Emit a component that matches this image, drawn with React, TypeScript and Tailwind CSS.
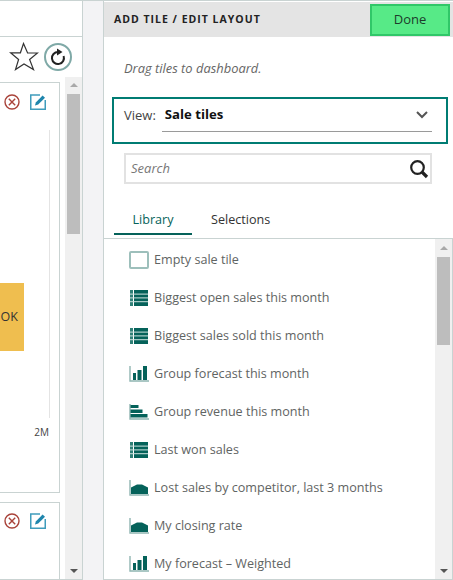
import React from "react";

const teal = "#05625a";

function TableIcon() {
  return (
    <svg width="20" height="16" viewBox="0 0 20 16" className="shrink-0 -mt-[1px]">
      <rect x="1" y="0" width="18" height="16" fill={teal} />
      <rect x="4" y="0" width="1" height="16" fill="#ffffff" />
      <rect x="1" y="0" width="3" height="16" fill="#2f8077" />
      <rect x="1" y="3.6" width="18" height="1" fill="#cfe3e0" />
      <rect x="1" y="7.4" width="18" height="1" fill="#cfe3e0" />
      <rect x="1" y="11.2" width="18" height="1" fill="#cfe3e0" />
    </svg>
  );
}
function EmptyIcon() {
  return <div className="w-[20px] h-[18px] shrink-0 border-2 border-[#9dbfbb] rounded-[2px] bg-white" />;
}
function ColumnsIcon() {
  return (
    <svg width="20" height="16" viewBox="0 0 20 16" className="shrink-0">
      <path d="M1 0V15H20" fill="none" stroke="#8fb5b1" strokeWidth="1.4" />
      <rect x="4" y="7" width="3" height="7" fill={teal} />
      <rect x="8.5" y="4" width="4" height="10" fill={teal} />
      <rect x="14" y="0" width="4" height="14" fill={teal} />
    </svg>
  );
}
function BarsIcon() {
  return (
    <svg width="20" height="16" viewBox="0 0 20 16" className="shrink-0">
      <path d="M1 0V15H20" fill="none" stroke="#8fb5b1" strokeWidth="1.4" />
      <rect x="1.5" y="1" width="8" height="3" fill={teal} />
      <rect x="1.5" y="5.5" width="12" height="3.5" fill={teal} />
      <rect x="1.5" y="10" width="17" height="3.5" fill={teal} />
    </svg>
  );
}
function AreaIcon() {
  return (
    <svg width="20" height="16" viewBox="0 0 20 16" className="shrink-0">
      <path d="M1 0V15H20" fill="none" stroke="#8fb5b1" strokeWidth="1.4" />
      <path d="M2 7.5L8 4.5H13L19 7.5V14H2Z" fill={teal} />
    </svg>
  );
}

function CloseCircle() {
  return (
    <svg width="16" height="16" viewBox="0 0 16 16" className="shrink-0">
      <circle cx="8" cy="8" r="7" fill="none" stroke="#a9433a" strokeWidth="1.4" />
      <path d="M4.8 4.8L11.2 11.2M11.2 4.8L4.8 11.2" stroke="#a9433a" strokeWidth="1.4" />
    </svg>
  );
}
function EditIcon() {
  return (
    <svg width="16" height="16" viewBox="0 0 16 16" className="shrink-0">
      <path d="M10 1H0.75V15.25H15.25V6" fill="none" stroke="#3f9cbc" strokeWidth="1.5" />
      <path d="M5 11.5L5.8 8.4L12.6 1.4L15 3.8L8.2 10.6Z" fill="#1f86ad" />
    </svg>
  );
}

const items: [string, React.ReactNode][] = [
  ["Empty sale tile", <EmptyIcon />],
  ["Biggest open sales this month", <TableIcon />],
  ["Biggest sales sold this month", <TableIcon />],
  ["Group forecast this month", <ColumnsIcon />],
  ["Group revenue this month", <BarsIcon />],
  ["Last won sales", <TableIcon />],
  ["Lost sales by competitor, last 3 months", <AreaIcon />],
  ["My closing rate", <AreaIcon />],
  ["My forecast – Weighted", <ColumnsIcon />],
];

export default function App() {
  return (
    <div className="w-[453px] h-[580px] flex overflow-hidden bg-white text-[12.6px] font-['Open_Sans','Noto_Sans',sans-serif]">
      {/* left dashboard */}
      <div className="w-[83px] h-full shrink-0 flex flex-col border-r border-[#c9d3d2] border-t border-b">
        <div className="h-[36px] shrink-0 border-b border-[#c9d3d2]" />
        <div className="h-[40px] shrink-0 flex items-center justify-end gap-[5px] pr-[10px]">
          <svg width="30" height="30" viewBox="0 0 30 30">
            <path
              d="M14.5 1.5L18.6 11H28.5L20.6 17.5L24.5 27.5L15 22L6.5 27.5L9.6 17.5L1.5 10.8H11.4Z"
              fill="#fff"
              stroke="#333"
              strokeWidth="1.2"
            />
          </svg>
          <div className="w-[28px] h-[28px] rounded-full border-2 border-[#7fa9a7] flex items-center justify-center">
            <svg width="16" height="18" viewBox="0 0 16 18">
              <path d="M13.6 8A6 6 0 1 1 8 4" fill="none" stroke="#222" strokeWidth="2" />
              <path d="M7 0.5L12.5 4L7 7.5Z" fill="#222" />
            </svg>
          </div>
        </div>
        <div className="flex-1 min-h-0 flex">
          <div className="w-[65px] pr-[5px] flex flex-col pt-[5px]">
            <div className="h-[411px] shrink-0 border-t border-r border-b border-[#c9d3d2] flex flex-col relative">
              <div className="flex gap-[10px] pl-[4px] pt-[11px]">
                <CloseCircle />
                <EditIcon />
              </div>
              <div className="absolute left-[49px] top-[47px] h-[288px] w-[1px] bg-[#e4e4e4]" />
              <div className="mt-[173px] w-[24px] h-[68px] bg-[#efbe4f] flex items-center justify-end text-[12.5px] text-[#333] pr-[6px] overflow-hidden">
                OK
              </div>
              <div className="mt-[74px] pr-[10px] text-right text-[10px] leading-[14px] text-[#444]">2M</div>
            </div>
            <div className="flex-1 mt-[9px] border-t border-r border-[#c9d3d2] flex gap-[10px] pl-[4px] pt-[10px]">
              <CloseCircle />
              <EditIcon />
            </div>
          </div>
          <div className="w-[17px] bg-[#f0f0f0] flex flex-col items-center pt-[6px] pb-[6px]">
            <div className="w-0 h-0 border-l-[4px] border-r-[4px] border-b-[4px] border-l-transparent border-r-transparent border-b-[#a9a9a9]" />
            <div className="w-[13px] h-[140px] bg-[#bdbdbd] mt-[7px]" />
            <div className="flex-1" />
            <div className="w-0 h-0 border-l-[4px] border-r-[4px] border-t-[4px] border-l-transparent border-r-transparent border-t-[#555]" />
          </div>
        </div>
      </div>
      {/* gutter */}
      <div className="w-[20px] h-full shrink-0 bg-[#f3f3f5] border-t border-[#c9d3d2]" />
      {/* panel */}
      <div className="flex-1 min-w-0 h-full flex flex-col border-l border-t border-b border-[#c9d3d2]">
        <div className="h-[35px] shrink-0 mt-[1px] bg-[#e4e4e4] flex items-center justify-between pl-[10px] pr-[3px]">
          <span className="text-[10.5px] font-bold tracking-[1px] text-[#222]">ADD TILE / EDIT LAYOUT</span>
          <div className="w-[80px] h-[32px] bg-[#57ea87] border-2 border-[#30c768] flex items-center justify-center text-[13px] text-[#1d3b2b]">
            Done
          </div>
        </div>
        <div className="h-[60px] shrink-0 flex items-center pl-[20px] pt-[4px] italic text-[12.9px] text-[#666]">
          Drag tiles to dashboard.
        </div>
        <div className="ml-[8px] mr-[5px] h-[47px] shrink-0 border-2 border-[#007c73] pl-[10px] pr-[14px] flex items-start">
          <div className="flex items-center w-full">
            <span className="text-[13px] text-[#444] mr-[6px]">View:</span>
            <div className="flex-1 h-[33px] border-b border-[#9a9a9a] flex items-center justify-between pr-[4px] pl-[3px]">
              <span className="text-[13.2px] font-bold text-[#111]">Sale tiles</span>
              <svg width="12" height="8" viewBox="0 0 12 8">
                <path d="M1 1L6 6L11 1" fill="none" stroke="#555" strokeWidth="2" />
              </svg>
            </div>
          </div>
        </div>
        <div className="ml-[20px] mr-[21px] mt-[9px] h-[31px] shrink-0 border-2 border-[#e2e2e2] flex items-center justify-between pl-[5px] pr-[1px]">
          <span className="italic text-[13px] text-[#777]">Search</span>
          <svg width="20" height="20" viewBox="0 0 20 20">
            <circle cx="8.5" cy="8.5" r="6.3" fill="none" stroke="#222" strokeWidth="2.2" />
            <path d="M13 13L18 18" stroke="#222" strokeWidth="3.2" />
          </svg>
        </div>
        <div className="h-[55px] shrink-0 flex items-end border-b border-[#c9d3d2] pl-[10px] pb-[3px]">
          <div className="w-[78px] h-[30px] border-b-2 border-[#05625a] text-center text-[12.6px] leading-[30px] text-[#05625a]">
            Library
          </div>
          <div className="h-[30px] pl-[19px] text-[12.6px] leading-[30px] text-[#333]">Selections</div>
        </div>
        <div className="flex-1 min-h-0 flex">
          <div className="flex-1 min-w-0 overflow-hidden pl-[25px] pt-[2px]">
            {items.map(([label, icon]) => (
              <div key={label} className="h-[38px] flex items-center gap-[5px] whitespace-nowrap text-[#5f6463]">
                {icon}
                <span>{label}</span>
              </div>
            ))}
          </div>
          <div className="w-[18px] shrink-0 border-r border-[#c9d3d2] bg-[#f0f0f0] flex flex-col items-center pt-[7px] pb-[6px]">
            <div className="w-0 h-0 border-l-[4px] border-r-[4px] border-b-[4px] border-l-transparent border-r-transparent border-b-[#a9a9a9]" />
            <div className="w-[13px] h-[88px] bg-[#bdbdbd] mt-[7px]" />
            <div className="flex-1" />
            <div className="w-0 h-0 border-l-[4px] border-r-[4px] border-t-[4px] border-l-transparent border-r-transparent border-t-[#555]" />
          </div>
        </div>
      </div>
    </div>
  );
}
